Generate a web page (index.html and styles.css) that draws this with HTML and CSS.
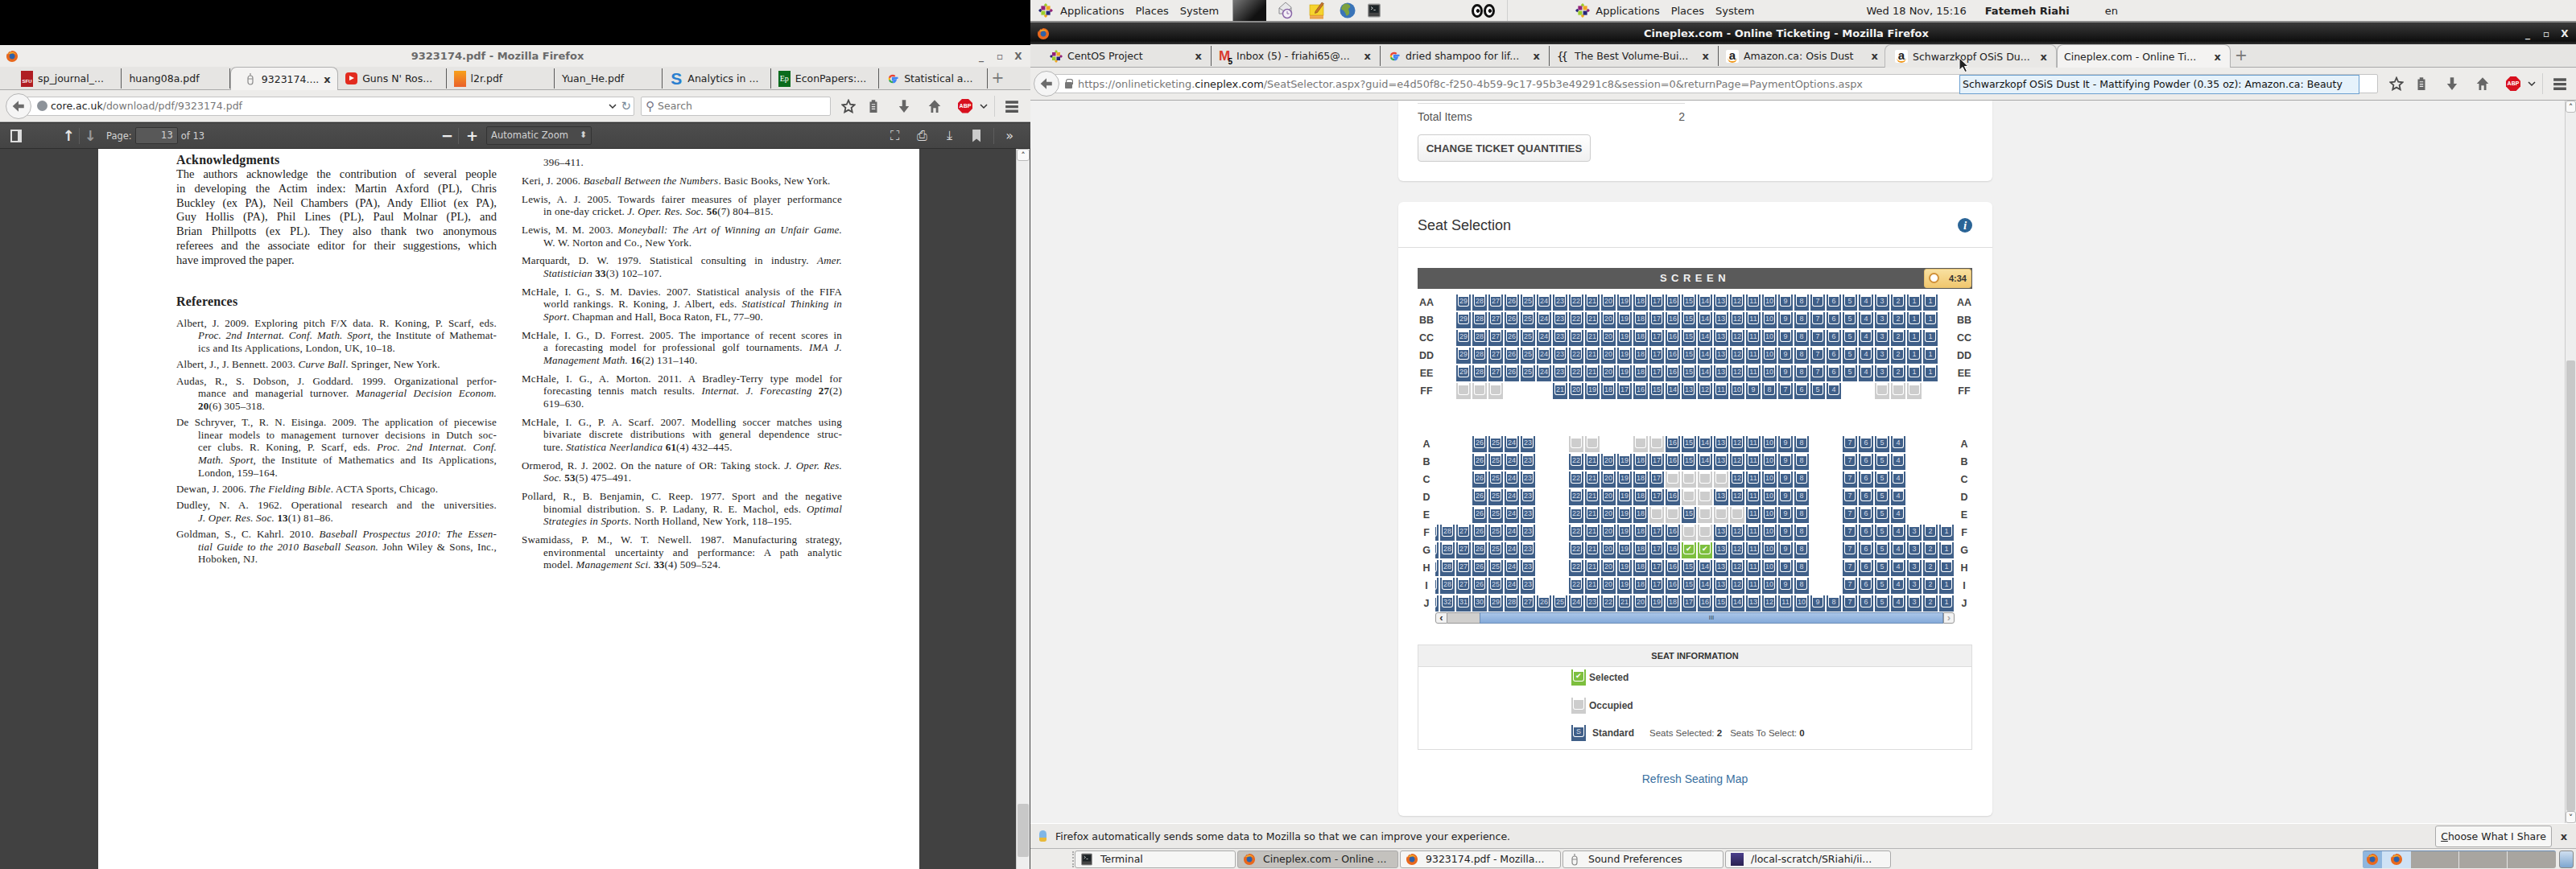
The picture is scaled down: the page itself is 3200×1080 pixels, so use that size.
FILE: index.html
```html
<!DOCTYPE html>
<html lang="en">
<head>
    <meta charset="UTF-8">
    <title>Desktop</title>
    <link rel="stylesheet" href="styles.css">
</head>
<body>
    <svg class="icon-defs" xmlns="http://www.w3.org/2000/svg">
        <symbol id="i-fox" viewBox="0 0 16 16">
            <circle cx="8" cy="8" r="6" fill="#2f62a8"/>
            <path d="M8 1c3.900 0 7 3.100 7 7s-3.100 7-7 7-7-3.100-7-7c0-1.500.5-3 1.300-4.200-.1.8.1 1.500.5 2 .1-1.600 1-3.300 2.700-4.200-.3.7-.3 1.300 0 1.800C5.900 2.200 6.900 1.400 8 1zm.2 3.200C6.300 4.200 4.600 5.700 4.600 8c0 2 1.600 3.500 3.500 3.500 2 0 3.500-1.500 3.500-3.400 0-2-1.500-3.900-3.400-3.900z" fill="#e8681d"/>
            <path d="M3 5c3-3 8-3 10 1-2-2-4-2-5-1.500C6 4.500 5 5 3 5z" fill="#f7b32b"/>
        </symbol>
        <symbol id="i-centos" viewBox="0 0 16 16">
            <path d="M8 0l2 2-2 2zM8 0L6 2l2 2z" fill="#9ccd2a"/>
            <path d="M16 8l-2 2-2-2zM16 8l-2-2-2 2z" fill="#932279"/>
            <path d="M8 16l2-2-2-2zM8 16l-2-2 2-2z" fill="#efa724"/>
            <path d="M0 8l2 2 2-2zM0 8l2-2 2 2z" fill="#262577"/>
            <rect x="3" y="3" width="4.500" height="4.500" fill="#932279"/>
            <rect x="8.500" y="3" width="4.500" height="4.500" fill="#efa724"/>
            <rect x="3" y="8.500" width="4.500" height="4.500" fill="#9ccd2a"/>
            <rect x="8.500" y="8.500" width="4.500" height="4.500" fill="#262577"/>
        </symbol>
        <symbol id="i-star" viewBox="0 0 16 16">
            <path d="M8 1.500l2 4.500 4.800.5-3.600 3.200 1 4.800L8 12.100l-4.200 2.400 1-4.800L1.200 6.500 6 6z" fill="none" stroke="#4a4a4a" stroke-width="1.600"/>
        </symbol>
        <symbol id="i-clip" viewBox="0 0 16 16">
            <path d="M6 1h4v2h2v12H4V3h2z" fill="#666"/>
            <path d="M6 6h4M6 8.500h4M6 11h4" stroke="#eee" stroke-width="1"/>
        </symbol>
        <symbol id="i-down" viewBox="0 0 16 16">
            <path d="M6 1h4v7h3.500L8 15 2.500 8H6z" fill="#666"/>
        </symbol>
        <symbol id="i-home" viewBox="0 0 16 16">
            <path d="M8 1l6.500 7H12v7H9.500v-5h-3v5H4V8H1.500z" fill="#666"/>
        </symbol>
        <symbol id="i-menu" viewBox="0 0 16 16">
            <path d="M1 2h14v3H1zM1 7h14v3H1zM1 12h14v3H1z" fill="#555"/>
        </symbol>
        <symbol id="i-back" viewBox="0 0 16 16">
            <path d="M8 2v4h6v4H8v4L1.500 8z" fill="#6b6b6b"/>
        </symbol>
        <symbol id="i-chev" viewBox="0 0 10 10">
            <path d="M1 3l4 4 4-4" fill="none" stroke="#333" stroke-width="1.500"/>
        </symbol>
        <symbol id="i-google" viewBox="0 0 16 16">
            <path d="M14.500 6.800H8v2.600h3.700C11.200 11.200 9.800 12.200 8 12.200" fill="none" stroke="#4285f4" stroke-width="2.200"/>
            <path d="M8 12.200c-1.900 0-3.500-1.200-4-3" fill="none" stroke="#34a853" stroke-width="2.200"/>
            <path d="M4 9.200c-.3-.9-.3-1.600 0-2.500" fill="none" stroke="#fbbc05" stroke-width="2.200"/>
            <path d="M4 6.700c.5-1.800 2.100-2.900 4-2.900 1.100 0 2 .4 2.700 1" fill="none" stroke="#ea4335" stroke-width="2.200"/>
        </symbol>
        <symbol id="i-term" viewBox="0 0 16 16">
            <rect x="1.500" y="1" width="13" height="14" rx="1" fill="#444" stroke="#999"/>
            <rect x="3" y="2.500" width="10" height="8" fill="#1c2326"/>
            <path d="M4.500 4l2 1.500-2 1.500M7.500 7.500h2" fill="none" stroke="#ddd" stroke-width=".8"/>
        </symbol>
        <symbol id="i-mouse" viewBox="0 0 16 16">
            <path d="M8 1v3M5 7a3 3 0 0 1 6 0v5a3 3 0 0 1-6 0z" fill="none" stroke="#8a8a8a" stroke-width="1.200"/>
            <path d="M5 8h6" stroke="#8a8a8a"/>
        </symbol>
        <symbol id="i-mail" viewBox="0 0 20 22">
            <path d="M2 8l8-7 7 6v8H2z" fill="#e8e8ea" stroke="#8c8c90"/>
            <path d="M2 8l8 5 7-5" fill="none" stroke="#8c8c90"/>
            <circle cx="12" cy="15" r="5.500" fill="#f4eff6" stroke="#8a66a8" stroke-width="1.500"/>
            <path d="M12 12v3h2.500" fill="none" stroke="#8a66a8"/>
        </symbol>
        <symbol id="i-note" viewBox="0 0 20 22">
            <rect x="1" y="4" width="17" height="13" fill="#f6d32d" stroke="#c9a10f" stroke-width=".6"/>
            <rect x="1" y="17" width="17" height="4.500" fill="#e89a3c"/>
            <path d="M1 18.500h17M1 20h17" stroke="#f4c27c" stroke-width=".5"/>
            <path d="M8 12l8-11 2.500 1.500-8 11-3 1z" fill="#c8752a" stroke="#6b3b10" stroke-width=".5"/>
        </symbol>
        <symbol id="i-globe" viewBox="0 0 20 22">
            <circle cx="10" cy="11" r="9.500" fill="#3a74b8"/>
            <path d="M6 3c3-1 6 0 7 2 1 2-1 3-2 4 0 2 2 3 1 6-1 2-3 3-4 2 0-3-2-4-3-6-1-1-3-1-3-2 1-3 2-5 4-6z" fill="#7da23f"/>
        </symbol>
    </svg>

    <div class="left-side">
        <div class="black-strip"></div>
        <div class="window window-light">
            <div class="titlebar titlebar-light">
                <svg class="fav"><use href="#i-fox"/></svg>
                <div class="title title-left">9323174.pdf - Mozilla Firefox</div>
                <div class="winbtns winbtns-left"><span>_</span><span>▫</span><span>X</span></div>
            </div>
            <div class="tabs tabs-left">
                <div class="tab"><span class="fav fav-sfu">SFU</span><span class="tab-name">sp_journal_...</span></div>
                <div class="tab"><span class="tab-name">huang08a.pdf</span></div>
                <div class="tab tab-active"><svg class="fav"><use href="#i-mouse"/></svg><span class="tab-name">9323174....</span><span class="tab-x">x</span></div>
                <div class="tab"><span class="fav fav-yt"></span><span class="tab-name">Guns N' Ros...</span></div>
                <div class="tab"><span class="fav fav-l2r"></span><span class="tab-name">l2r.pdf</span></div>
                <div class="tab"><span class="tab-name">Yuan_He.pdf</span></div>
                <div class="tab"><span class="fav fav-s">S</span><span class="tab-name">Analytics in ...</span></div>
                <div class="tab"><span class="fav fav-ep">Ep</span><span class="tab-name">EconPapers:...</span></div>
                <div class="tab"><svg class="fav"><use href="#i-google"/></svg><span class="tab-name">Statistical a...</span></div>
                <span class="tab-plus">+</span>
            </div>
            <div class="navbar navbar-left">
                <span class="back-btn"><svg class="nav-ic"><use href="#i-back"/></svg></span>
                <div class="urlbar urlbar-left">
                    <span class="globe"></span>
                    <span class="url"><b>core.ac.uk</b>/download/pdf/9323174.pdf</span>
                    <svg class="chev"><use href="#i-chev"/></svg>
                    <span class="reload">↻</span>
                </div>
                <div class="searchbar"><span class="lens">⚲</span>Search</div>
                <div class="nav-icons">
                    <svg class="nav-ic"><use href="#i-star"/></svg>
                    <svg class="nav-ic"><use href="#i-clip"/></svg>
                    <svg class="nav-ic"><use href="#i-down"/></svg>
                    <svg class="nav-ic"><use href="#i-home"/></svg>
                    <span class="nav-ic ic-abp">ABP</span>
                    <svg class="chev"><use href="#i-chev"/></svg>
                    <span class="nav-sep"></span>
                    <svg class="nav-ic"><use href="#i-menu"/></svg>
                </div>
            </div>
            <div class="pdf-toolbar">
                <span class="pdf-ic pdf-sidebar"></span>
                <span class="pdf-arrow">↑</span>
                <span class="pdf-sep"></span>
                <span class="pdf-arrow pdf-dim">↓</span>
                <span class="pdf-label">Page:</span>
                <span class="pdf-input">13</span>
                <span class="pdf-label">of 13</span>
                <span class="pdf-zoomctl">
                    <span class="pdf-pm">−</span>
                    <span class="pdf-sep"></span>
                    <span class="pdf-pm">+</span>
                    <span class="pdf-select">Automatic Zoom<i>⬍</i></span>
                </span>
                <span class="pdf-tools">
                    <span class="pdf-tool">⛶</span>
                    <span class="pdf-tool">⎙</span>
                    <span class="pdf-tool">⤓</span>
                    <span class="pdf-tool pdf-mark"></span>
                    <span class="pdf-sep"></span>
                    <span class="pdf-tool">»</span>
                </span>
            </div>
            <div class="pdf-view">
                <div class="pdf-page">
                    <div class="pdf-col">
                        <h3 class="pdf-head">Acknowledgments</h3>
                        <p class="ack">
                            <span class="ln">The authors acknowledge the contribution of several people</span>
                            <span class="ln">in developing the Actim index: Martin Axford (PL), Chris</span>
                            <span class="ln">Buckley (ex PA), Neil Chambers (PA), Andy Elliot (ex PA),</span>
                            <span class="ln">Guy Hollis (PA), Phil Lines (PL), Paul Molnar (PL), and</span>
                            <span class="ln">Brian Phillpotts (ex PL). They also thank two anonymous</span>
                            <span class="ln">referees and the associate editor for their suggestions, which</span>
                            <span class="ln end">have improved the paper.</span>
                        </p>
                        <h3 class="pdf-head pdf-head-refs">References</h3>
                        <p class="ref"><span class="ln">Albert, J. 2009. Exploring pitch F/X data. R. Koning, P. Scarf, eds.</span><span class="ln in"><i>Proc. 2nd Internat. Conf. Math. Sport</i>, the Institute of Mathemat-</span><span class="ln in end">ics and Its Applications, London, UK, 10–18.</span></p>
                        <p class="ref"><span class="ln end">Albert, J., J. Bennett. 2003. <i>Curve Ball</i>. Springer, New York.</span></p>
                        <p class="ref"><span class="ln">Audas, R., S. Dobson, J. Goddard. 1999. Organizational perfor-</span><span class="ln in">mance and managerial turnover. <i>Managerial Decision Econom.</i></span><span class="ln in end"><b>20</b>(6) 305–318.</span></p>
                        <p class="ref"><span class="ln">De Schryver, T., R. N. Eisinga. 2009. The application of piecewise</span><span class="ln in">linear models to management turnover decisions in Dutch soc-</span><span class="ln in">cer clubs. R. Koning, P. Scarf, eds. <i>Proc. 2nd Internat. Conf.</i></span><span class="ln in"><i>Math. Sport</i>, the Institute of Mathematics and Its Applications,</span><span class="ln in end">London, 159–164.</span></p>
                        <p class="ref"><span class="ln end">Dewan, J. 2006. <i>The Fielding Bible</i>. ACTA Sports, Chicago.</span></p>
                        <p class="ref"><span class="ln">Dudley, N. A. 1962. Operational research and the universities.</span><span class="ln in end"><i>J. Oper. Res. Soc.</i> <b>13</b>(1) 81–86.</span></p>
                        <p class="ref"><span class="ln">Goldman, S., C. Kahrl. 2010. <i>Baseball Prospectus 2010: The Essen-</i></span><span class="ln in"><i>tial Guide to the 2010 Baseball Season.</i> John Wiley &amp; Sons, Inc.,</span><span class="ln in end">Hoboken, NJ.</span></p>
                    </div>
                    <div class="pdf-col pdf-col-right">
                        <p class="ref"><span class="ln in end">396–411.</span></p>
                        <p class="ref"><span class="ln end">Keri, J. 2006. <i>Baseball Between the Numbers</i>. Basic Books, New York.</span></p>
                        <p class="ref"><span class="ln">Lewis, A. J. 2005. Towards fairer measures of player performance</span><span class="ln in end">in one-day cricket. <i>J. Oper. Res. Soc.</i> <b>56</b>(7) 804–815.</span></p>
                        <p class="ref"><span class="ln">Lewis, M. M. 2003. <i>Moneyball: The Art of Winning an Unfair Game.</i></span><span class="ln in end">W. W. Norton and Co., New York.</span></p>
                        <p class="ref"><span class="ln">Marquardt, D. W. 1979. Statistical consulting in industry. <i>Amer.</i></span><span class="ln in end"><i>Statistician</i> <b>33</b>(3) 102–107.</span></p>
                        <p class="ref"><span class="ln">McHale, I. G., S. M. Davies. 2007. Statistical analysis of the FIFA</span><span class="ln in">world rankings. R. Koning, J. Albert, eds. <i>Statistical Thinking in</i></span><span class="ln in end"><i>Sport</i>. Chapman and Hall, Boca Raton, FL, 77–90.</span></p>
                        <p class="ref"><span class="ln">McHale, I. G., D. Forrest. 2005. The importance of recent scores in</span><span class="ln in">a forecasting model for professional golf tournaments. <i>IMA J.</i></span><span class="ln in end"><i>Management Math.</i> <b>16</b>(2) 131–140.</span></p>
                        <p class="ref"><span class="ln">McHale, I. G., A. Morton. 2011. A Bradley-Terry type model for</span><span class="ln in">forecasting tennis match results. <i>Internat. J. Forecasting</i> <b>27</b>(2)</span><span class="ln in end">619–630.</span></p>
                        <p class="ref"><span class="ln">McHale, I. G., P. A. Scarf. 2007. Modelling soccer matches using</span><span class="ln in">bivariate discrete distributions with general dependence struc-</span><span class="ln in end">ture. <i>Statistica Neerlandica</i> <b>61</b>(4) 432–445.</span></p>
                        <p class="ref"><span class="ln">Ormerod, R. J. 2002. On the nature of OR: Taking stock. <i>J. Oper. Res.</i></span><span class="ln in end"><i>Soc.</i> <b>53</b>(5) 475–491.</span></p>
                        <p class="ref"><span class="ln">Pollard, R., B. Benjamin, C. Reep. 1977. Sport and the negative</span><span class="ln in">binomial distribution. S. P. Ladany, R. E. Machol, eds. <i>Optimal</i></span><span class="ln in end"><i>Strategies in Sports</i>. North Holland, New York, 118–195.</span></p>
                        <p class="ref"><span class="ln">Swamidass, P. M., W. T. Newell. 1987. Manufacturing strategy,</span><span class="ln in">environmental uncertainty and performance: A path analytic</span><span class="ln in end">model. <i>Management Sci.</i> <b>33</b>(4) 509–524.</span></p>
                    </div>
                </div>
                <div class="sb sb-dark">
                    <span class="sb-btn">˄</span>
                    <span class="sb-track"></span>
                    <span class="sb-thumb sb-thumb-dark"></span>
                </div>
            </div>
        </div>
    </div>

    <div class="right-side">
        <div class="top-panel">
            <svg class="panel-logo"><use href="#i-centos"/></svg>
            <span class="menu-item">Applications</span>
            <span class="menu-item">Places</span>
            <span class="menu-item">System</span>
            <span class="panel-thumb"></span>
            <svg class="launcher launcher-mail"><use href="#i-mail"/></svg>
            <svg class="launcher launcher-note"><use href="#i-note"/></svg>
            <svg class="launcher launcher-globe"><use href="#i-globe"/></svg>
            <svg class="launcher launcher-term"><use href="#i-term"/></svg>
            <span class="eyes"><i></i><i></i></span>
            <span class="panel-sep"></span>
            <svg class="panel-logo"><use href="#i-centos"/></svg>
            <span class="menu-item">Applications</span>
            <span class="menu-item">Places</span>
            <span class="menu-item">System</span>
            <span class="clock">Wed 18 Nov, 15:16</span>
            <b class="user">Fatemeh Riahi</b>
            <span class="lang">en</span>
        </div>
        <div class="window window-dark">
            <div class="titlebar titlebar-dark">
                <svg class="fav"><use href="#i-fox"/></svg>
                <div class="title title-right">Cineplex.com - Online Ticketing - Mozilla Firefox</div>
                <div class="winbtns"><span>_</span><span>▫</span><span>X</span></div>
            </div>
            <div class="tabs tabs-right">
                <div class="tab"><svg class="fav"><use href="#i-centos"/></svg><span class="tab-name">CentOS Project</span><span class="tab-x">x</span></div>
                <div class="tab"><span class="fav fav-gmail">M<sub>5</sub></span><span class="tab-name">Inbox (5) - friahi65@...</span><span class="tab-x">x</span></div>
                <div class="tab"><svg class="fav"><use href="#i-google"/></svg><span class="tab-name">dried shampoo for lif...</span><span class="tab-x">x</span></div>
                <div class="tab"><span class="fav fav-bv">{{</span><span class="tab-name">The Best Volume-Bui...</span><span class="tab-x">x</span></div>
                <div class="tab"><span class="fav fav-az">a</span><span class="tab-name">Amazon.ca: Osis Dust</span><span class="tab-x">x</span></div>
                <div class="tab tab-hover"><span class="fav fav-az">a</span><span class="tab-name">Schwarzkopf OSiS Du...</span><span class="tab-x">x</span></div>
                <div class="tab tab-active tab-cineplex"><span class="tab-name">Cineplex.com - Online Ti...</span><span class="tab-x">x</span></div>
                <span class="tab-plus">+</span>
            </div>
            <div class="navbar navbar-right">
                <span class="back-btn"><svg class="nav-ic"><use href="#i-back"/></svg></span>
                <div class="urlbar urlbar-right">
                    <span class="lock"></span>
                    <span class="url">https://onlineticketing.<b>cineplex.com</b>/SeatSelector.aspx?guid=e4d50f8c-f250-4b59-9c17-95b3e49291c8&amp;session=0&amp;returnPage=PaymentOptions.aspx</span>
                </div>
                <div class="nav-icons">
                    <svg class="nav-ic"><use href="#i-star"/></svg>
                    <svg class="nav-ic"><use href="#i-clip"/></svg>
                    <svg class="nav-ic"><use href="#i-down"/></svg>
                    <svg class="nav-ic"><use href="#i-home"/></svg>
                    <span class="nav-ic ic-abp">ABP</span>
                    <svg class="chev"><use href="#i-chev"/></svg>
                    <span class="nav-sep"></span>
                    <svg class="nav-ic"><use href="#i-menu"/></svg>
                </div>
            </div>
            <div class="web-view">
                <div class="web-scroll">
                    <div class="card card-tickets">
                        <div class="total-row"><span>Total Items</span><span>2</span></div>
                        <button class="btn-change">CHANGE TICKET QUANTITIES</button>
                    </div>
                    <div class="card card-seats">
                        <div class="card-head">
                            <h2>Seat Selection</h2>
                            <span class="info-ic">i</span>
                        </div>
                        <div class="card-body">
                            <div class="screen">SCREEN<span class="timer"><i class="timer-ic"></i>4:34</span></div>
                            <div id="seat-map" class="seat-map"></div>
                            <div class="map-scrollbar">
                                <span class="map-btn">‹</span>
                                <span class="map-track"></span>
                                <span class="map-thumb">III</span>
                                <span class="map-btn map-btn-r">›</span>
                            </div>
                            <div class="seat-info">
                                <div class="seat-info-head">SEAT INFORMATION</div>
                                <div class="legend">
                                    <div class="legend-row"><span class="seat seat-selected"><span class="seat-in">✔</span></span><b>Selected</b></div>
                                    <div class="legend-row"><span class="seat seat-occupied"><span class="seat-in"></span></span><b>Occupied</b></div>
                                    <div class="legend-row legend-std"><span class="seat"><span class="seat-in">S</span></span><b>Standard</b>
                                        <span class="legend-count">Seats Selected: <b>2</b></span>
                                        <span class="legend-count">Seats To Select: <b>0</b></span>
                                    </div>
                                </div>
                            </div>
                            <a class="refresh" href="#">Refresh Seating Map</a>
                        </div>
                    </div>
                </div>
                <div class="sb sb-light">
                    <span class="sb-btn">˄</span>
                    <span class="sb-track"></span>
                    <span class="sb-thumb"></span>
                    <span class="sb-btn">˅</span>
                </div>
            </div>
            <div class="notice">
                <span class="bulb"></span>
                <span class="notice-text">Firefox automatically sends some data to Mozilla so that we can improve your experience.</span>
                <button class="notice-btn"><u>C</u>hoose What I Share</button>
                <span class="tab-x notice-x">x</span>
            </div>

            <div class="tooltip">Schwarzkopf OSiS Dust It - Mattifying Powder (0.35 oz): Amazon.ca: Beauty</div>
            <svg class="cursor" viewBox="0 0 12 20"><path d="M1 1v15l4-3.500 3 6 2.500-1-3-6H12z" fill="#222" stroke="#fff" stroke-width="1"/></svg>
        </div>
        <div class="bottom-panel">
            <span class="grip"></span>
            <div class="task"><svg class="fav"><use href="#i-term"/></svg>Terminal</div>
            <div class="task task-active"><svg class="fav"><use href="#i-fox"/></svg>Cineplex.com - Online ...</div>
            <div class="task"><svg class="fav"><use href="#i-fox"/></svg>9323174.pdf - Mozilla...</div>
            <div class="task"><svg class="fav"><use href="#i-mouse"/></svg>Sound Preferences</div>
            <div class="task task-wide"><span class="fav fav-tex"></span>/local-scratch/SRiahi/ii...</div>
            <div class="pager">
                <span class="pager-cell pager-on"><svg class="fav"><use href="#i-fox"/></svg></span>
                <span class="pager-cell pager-half"><svg class="fav"><use href="#i-fox"/></svg></span>
                <span class="pager-cell"></span>
                <span class="pager-cell"></span>
                <span class="pager-cell"></span>
            </div>
            <span class="show-desk"></span>
        </div>
    </div>
    <script src="seats.js"></script>
</body>
</html>
```

FILE: styles.css
```css
* { box-sizing: border-box; }
html, body { margin: 0; height: 100%; }
body { width: 3200px; height: 1080px; overflow: hidden; display: flex; font-family: "DejaVu Sans", sans-serif; font-size: 12.5px; color: #333; background: #000; }
.icon-defs { width: 0; height: 0; position: absolute; }
.fav { width: 16px; height: 16px; flex: none; display: inline-block; }

.left-side { width: 1280px; display: flex; flex-direction: column; flex: none; }
.black-strip { height: 56px; background: #000; flex: none; }
.right-side { width: 1920px; display: flex; flex-direction: column; flex: none; }
.window { flex: 1; min-height: 0; display: flex; flex-direction: column; position: relative; background: #edecea; }

/* title bars */
.titlebar { display: flex; align-items: center; flex: none; padding: 0 1px 0 7px; }
.titlebar-light { height: 27px; background: #eeedeb; border-radius: 4px 4px 0 0; }
.titlebar-dark { height: 27px; background: linear-gradient(#3a3a3a, #0f0f0f 85%, #333); padding: 0 0 0 8px; }
.title { flex: 1; text-align: center; font-weight: 700; font-size: 13px; }
.title-left { color: #6a6a6a; }
.title-right { color: #f2f2f2; }
.winbtns { display: flex; gap: 11px; font-weight: 700; font-size: 12px; color: #eee; width: 66px; }
.winbtns span { width: 12px; text-align: center; }
.winbtns-left { color: #666; }

/* tabs */
.tabs { display: flex; align-items: stretch; flex: none; background: #e6e5e3; border-bottom: 1px solid #a9a9a9; }
.tabs-left { height: 29px; padding-left: 17px; }
.tabs-right { height: 29px; padding-left: 15px; }
.tab { display: flex; align-items: center; gap: 6px; padding-left: 9px; padding-right: 11px; border-right: 1px solid #5a5a5a; margin: 2px 0 1px; white-space: nowrap; color: #222; flex: none; }
.tabs-left .tab { width: 134.4px; }
.tabs-right .tab { width: 210px; }
.tab-name { flex: none; }
.tab-x { font-weight: 700; font-size: 13px; color: #333; margin-left: auto; }
.tab-active { background: #f4f3f2; border: 1px solid #b0b0b0; border-bottom: none; border-radius: 8px 8px 0 0; margin: 0 0 -1px; padding-left: 16px; }
.tabs-left .tab-active { padding-right: 13px; }
.tabs-right .tab-hover { background: #e9e8e6; border: 1px solid #b8b8b8; border-bottom: none; border-radius: 8px 8px 0 0; margin: 0 0 -1px -4px; padding-left: 12px; width: 214px; }
.tabs-right .tab-cineplex { padding-left: 8px; width: 216px; }
.tab-plus { width: 26px; text-align: center; font-size: 19px; line-height: 27px; color: #777; }
.fav-sfu { width: 15px; height: 20px; background: #b01d22; color: #fff; font: 700 6px/26px "Liberation Sans", sans-serif; text-align: center; }
.fav-yt { background: #e22b1f; border-radius: 4px; position: relative; width: 15px; height: 15px; }
.fav-yt::after { content: ""; position: absolute; left: 5px; top: 4px; border-left: 6px solid #fff; border-top: 3.500px solid transparent; border-bottom: 3.500px solid transparent; }
.fav-l2r { width: 15px; height: 20px; background: linear-gradient(#f7a11b, #e9602a); }
.fav-s { color: #2a7fd0; font: 700 21px/16px "Liberation Sans", sans-serif; text-align: center; }
.fav-ep { background: #0a6b1c; color: #fff; width: 15px; height: 20px; font: 10px/20px "Liberation Serif", serif; text-align: center; }
.fav-gmail { color: #d93a30; font: 700 17px/15px "Liberation Sans", sans-serif; position: relative; }
.fav-gmail sub { position: absolute; right: -1px; bottom: -4px; font-size: 10px; color: #000; line-height: 10px; }
.fav-bv { font: 14px/16px "DejaVu Sans Mono", monospace; color: #222; letter-spacing: -3px; }
.fav-az { background: #fff; border-radius: 2px; color: #222; font: 700 15px/13px "Liberation Sans", sans-serif; text-align: center; position: relative; }
.fav-az::after { content: ""; position: absolute; left: 2px; right: 2px; bottom: 0; height: 5px; border-bottom: 2px solid #f19a1f; border-radius: 0 0 8px 8px; }

/* nav bar */
.navbar { display: flex; align-items: center; flex: none; background: #edecea; border-bottom: 1px solid #a9a9a9; position: relative; }
.navbar-left { height: 40px; padding-left: 7px; }
.navbar-right { height: 41px; padding-left: 4px; }
.back-btn { width: 32px; height: 32px; border-radius: 50%; border: 1px solid #b5b5b5; background: #f5f5f5; display: flex; align-items: center; justify-content: center; flex: none; z-index: 1; margin-right: -6px; }
.urlbar, .searchbar { height: 24px; background: #fff; border: 1px solid #c4c4c4; border-radius: 2px; display: flex; align-items: center; color: #777; flex: none; font-size: 12.5px; }
.urlbar-left { width: 755px; padding-left: 12px; margin-right: 8px; }
.urlbar-right { width: 1644px; padding-left: 12px; font-size: 12.9px; margin-right: 14px; }
.urlbar .url { flex: 1; white-space: nowrap; margin-left: 4px; }
.urlbar .url b { font-weight: 400; color: #222; }
.globe { width: 13px; height: 13px; border-radius: 50%; background: #8d939a; flex: none; }
.lock { width: 9px; height: 8px; background: #777; border-radius: 1px; flex: none; margin: 3px 3px 0 0; position: relative; }
.lock::before { content: ""; position: absolute; left: 1px; top: -4px; width: 7px; height: 6px; border: 1.500px solid #777; border-bottom: none; border-radius: 3px 3px 0 0; }
.chev { width: 10px; height: 10px; flex: none; }
.reload { color: #7a8a9a; font-size: 15px; margin: 0 3px 0 5px; }
.searchbar { width: 236px; padding-left: 5px; margin-right: 13px; }
.lens { color: #778; font-size: 15px; margin-right: 4px; transform: scaleX(-1); }
.nav-icons { display: flex; align-items: center; flex: none; }
.nav-ic { width: 18px; height: 18px; flex: none; }
.nav-icons .nav-ic { margin-right: 20px; }
.nav-icons .nav-ic:first-child { margin-right: 13px; }
.ic-abp { display: block; background: #d8101e; clip-path: polygon(30% 0, 70% 0, 100% 30%, 100% 70%, 70% 100%, 30% 100%, 0 70%, 0 30%); color: #fff; font: 700 7px/18px "Liberation Sans", sans-serif; text-align: center; }
.nav-icons .chev { margin-left: -11px; margin-right: 8px; }
.nav-sep { width: 1px; height: 26px; background: #d0d0d0; margin-right: 12px; }
.nav-icons .nav-ic:last-child { margin-right: 0; }

/* pdf viewer */
.pdf-toolbar { height: 33px; flex: none; background: linear-gradient(#4d4d4d, #444); display: flex; align-items: center; color: #d4d4d4; font-size: 11.5px; padding-left: 13px; border-top: 1px solid #2e2e2e; border-bottom: 1px solid #2e2e2e; }
.pdf-ic { width: 14px; height: 16px; border: 2px solid #ddd; border-right-width: 5px; flex: none; margin-right: 50px; }
.pdf-arrow { font-size: 18px; font-weight: 700; color: #e6e6e6; width: 16px; text-align: center; }
.pdf-dim { color: #999; }
.pdf-sep { width: 1px; height: 20px; background: #333; border-right: 1px solid #5c5c5c; flex: none; margin: 0 5px; }
.pdf-label { margin: 0 4px 0 12px; }
.pdf-label + .pdf-input + .pdf-label { margin-left: 4px; }
.pdf-input { width: 53px; height: 21px; background: #585858; border: 1px solid #333; border-radius: 2px; text-align: right; padding: 2px 5px 0 0; }
.pdf-zoomctl { display: flex; align-items: center; margin-left: 290px; }
.pdf-zoomctl .pdf-sep { margin: 0 9px; }
.pdf-pm { font-size: 18px; font-weight: 700; color: #eee; width: 12px; text-align: center; }
.pdf-select { width: 131px; height: 23px; margin-left: 13px; background: #4a4a4a; border: 1px solid #333; border-radius: 2px; padding: 3px 5px; display: flex; justify-content: space-between; }
.pdf-select i { font-style: normal; font-size: 11px; }
.pdf-tools { display: flex; align-items: center; margin-left: 366px; gap: 14px; }
.pdf-tool { width: 20px; text-align: center; font-size: 16px; color: #ddd; }
.pdf-mark { width: 10px; height: 16px; background: #ccc; clip-path: polygon(0 0, 100% 0, 100% 100%, 50% 75%, 0 100%); margin: 0 5px; }
.pdf-tools .pdf-sep { margin: 0 -5px 0 -3px; }

.pdf-view { flex: 1; min-height: 0; background: #414141; display: flex; position: relative; overflow: hidden; }
.pdf-page { width: 1020px; margin-left: 122px; background: #fff; flex: none; display: flex; font-family: "Liberation Serif", serif; color: #222; padding: 5px 0 0 97px; height: 900px; overflow: hidden; }
.pdf-col { width: 398px; flex: none; }
.pdf-col-right { margin: 4px 0 0 31px; }
.pdf-head { margin: 0; font-size: 16px; line-height: 17px; letter-spacing: .2px; }
.pdf-head-refs { margin: 33px 0 11px; }
.ack { margin: 1px 0 0; font-size: 14.5px; line-height: 17.8px; }
.ln { display: block; text-align: justify; text-align-last: justify; white-space: nowrap; }
.in { padding-left: 27px; }
.end { text-align-last: left; }
.ref { margin: 0 0 4.800px; font-size: 13px; line-height: 15.6px; letter-spacing: .2px; }
.pdf-col-right .ref { margin-bottom: 7.200px; }

.sb { width: 14px; display: flex; flex-direction: column; flex: none; position: relative; background: #eee; border-left: 1px solid #ccc; font-size: 11px; text-align: center; }
.sb-dark { margin-left: 120px; width: 17px; }
.sb-btn { height: 15px; line-height: 15px; background: #fafafa; border: 1px solid #bbb; border-radius: 3px; color: #333; flex: none; }
.sb-track { flex: 1; }
.sb-thumb { position: absolute; left: 1px; right: 1px; top: 323px; bottom: 15px; background: #c8c8c8; border-radius: 2px; }
.sb-thumb-dark { top: auto; bottom: 15px; height: 66px; }

/* top panel */
.top-panel { height: 28px; flex: none; background: #edecea; border-bottom: 2px solid #8c8c8c; display: flex; align-items: center; padding-left: 10px; font-size: 13px; color: #222; }
.panel-logo { width: 18px; height: 20px; flex: none; margin-right: 9px; }
.menu-item { margin-right: 14px; flex: none; }
.panel-thumb { width: 42px; height: 26px; background: linear-gradient(135deg, #777, #111 70%); border-left: 1px solid #999; margin: 0 14px 0 3px; flex: none; }
.launcher { height: 22px; flex: none; }
.launcher-mail { width: 20px; margin-right: 19px; }
.launcher-note { width: 20px; margin-right: 18px; }
.launcher-globe { width: 20px; margin-right: 14px; }
.launcher-term { width: 18px; }
.eyes { display: flex; margin-left: 112px; gap: 1px; flex: none; }
.eyes i { width: 14px; height: 17px; border: 3px solid #111; border-radius: 50%; background: radial-gradient(circle at 60% 50%, #111 0 2px, #fff 2.500px); }
.panel-sep { width: 1px; height: 26px; background: #cfcfcf; margin: 0 84px 0 15px; flex: none; }
.panel-sep + .panel-logo { margin-right: 7px; }
.clock { margin-left: 125px; flex: none; }
.user { margin-left: 23px; flex: none; }
.lang { margin-left: 44px; flex: none; }

/* web page */
.web-view { flex: 1; min-height: 0; display: flex; background: #f1f1f1; }
.web-scroll { flex: 1; padding-left: 457px; overflow: hidden; }
.card { width: 738px; background: #fff; box-shadow: 0 1px 2px rgba(0,0,0,.12); font-family: "Liberation Sans", sans-serif; }
.card-tickets { height: 100px; padding: 3px 24px 0; border-radius: 0 0 6px 6px; }
.total-row { width: 332px; display: flex; justify-content: space-between; border-top: 1px solid #ddd; padding-top: 8px; font-size: 14px; line-height: 16px; color: #555; }
.btn-change { display: block; margin-top: 14px; width: 215px; height: 34px; border: 1px solid #ccc; border-radius: 4px; background: linear-gradient(#fff, #f0f0f0); font: 700 13.3px "Liberation Sans", sans-serif; color: #444; padding: 0; white-space: nowrap; }
.card-seats { margin-top: 26px; height: 763px; border-radius: 6px; }
.card-head { height: 57px; border-bottom: 1px solid #ddd; display: flex; align-items: center; justify-content: space-between; padding: 2px 25px 0 24px; }
.card-head h2 { margin: 0; font-size: 18px; font-weight: 400; color: #333; }
.info-ic { width: 18px; height: 18px; border-radius: 50%; background: #2a6496; color: #fff; font: italic 700 15px/18px "Liberation Serif", serif; text-align: center; }
.card-body { padding: 25px 25px 0 24px; }

.screen { height: 26px; background: #5a5a5a; color: #f2f2f2; font-weight: 700; font-size: 13px; letter-spacing: 5.500px; text-align: center; line-height: 26px; position: relative; margin-bottom: 7px; }
.timer { position: absolute; right: 1px; top: 1px; width: 59px; height: 24px; background: linear-gradient(#f8e0a0, #f1c76e); border: 1px solid #e4c070; border-radius: 3px; color: #333; font-size: 11px; letter-spacing: 0; line-height: 22px; text-align: right; padding-right: 5px; }
.timer-ic { position: absolute; left: 5px; top: 4px; width: 13px; height: 13px; border-radius: 50%; border: 2px solid #d0913a; background: #fff; }

.seat-row { display: flex; height: 22px; }
.row-label { width: 22px; height: 20px; line-height: 20px; text-align: center; flex: none; font-weight: 700; font-size: 12.5px; color: #444; }
.seat-clip { width: 646px; height: 20px; overflow: hidden; flex: none; display: flex; gap: 2px; }
.slot-gap, .seat { width: 18px; height: 20px; flex: none; }
.slot-first { margin-left: -14px; }
.seat { background: #3f5f88; padding: 0 2px 5px; display: block; }
.seat-in { display: block; height: 15px; background: #3f5f88; border: 1px solid #fff; border-top-width: 3px; border-radius: 0 0 3px 3px; color: #d5dde8; font: 9px/11px "Liberation Sans", sans-serif; text-align: center; }
.seat-occupied { background: #cdcdcd; }
.seat-occupied .seat-in { background: #cdcdcd; }
.seat-selected { background: #7dbf3e; }
.seat-selected .seat-in { background: #7dbf3e; color: #fff; font-size: 9px; }

.map-scrollbar { display: flex; height: 14px; margin: -1px 22px 0; position: relative; }
.map-btn { width: 15px; background: #f2f2f2; border: 1px solid #999; border-radius: 3px 0 0 3px; text-align: center; font: 700 13px/11px "Liberation Sans", sans-serif; color: #333; flex: none; }
.map-btn-r { width: 14px; border-radius: 0 3px 3px 0; color: #aaa; }
.map-track { width: 40px; background: #d0cfcd; border-top: 1px solid #999; border-bottom: 1px solid #999; flex: none; }
.map-thumb { flex: 1; background: linear-gradient(#a9c5e8, #85aad9); border: 1px solid #6e8fb8; text-align: center; font: 8px/12px "Liberation Sans", sans-serif; color: #345; }

.seat-info { margin-top: 26px; height: 131px; border: 1px solid #ddd; }
.seat-info-head { height: 27px; background: #f0f0f0; border-bottom: 1px solid #ddd; text-align: center; font-weight: 700; font-size: 11px; line-height: 26px; color: #333; }
.legend { padding: 3px 0 0 190px; }
.legend-row { display: flex; align-items: flex-start; height: 34.5px; font-size: 12px; color: #444; line-height: 20px; }
.legend-row > b { margin-left: 4px; }
.legend-std > b { margin-left: 8px; margin-right: 19px; }
.legend-count { margin-right: 10px; color: #555; font-size: 11.5px; }
.legend-count b { color: #333; }
.refresh { display: block; margin-top: 28px; text-align: center; color: #3a70a0; font-size: 14px; text-decoration: none; }

/* notification and panels */
.notice { height: 32px; flex: none; display: flex; align-items: center; background: #ebeae8; border-top: 1px solid #fff; border-bottom: 1px solid #b5b5b5; padding-left: 11px; font-size: 12.5px; color: #222; }
.bulb { width: 9px; height: 14px; border-radius: 5px 5px 3px 3px; background: linear-gradient(#7fb6e6 65%, #e8b93a 65%); flex: none; margin-right: 11px; }
.notice-text { flex: 1; }
.notice-btn { width: 145px; height: 27px; background: #f7f7f6; border: 1px solid #aaa; border-radius: 3px; font: 12.5px "DejaVu Sans", sans-serif; color: #222; padding: 0; flex: none; white-space: nowrap; }
.notice-x { width: 30px; text-align: center; margin-left: 0; }

.bottom-panel { height: 25px; flex: none; background: #edecea; display: flex; align-items: center; padding-left: 52px; font-size: 12.5px; color: #222; }
.grip { width: 3px; height: 20px; border-left: 2px dotted #aaa; flex: none; }
.task { width: 200px; height: 22px; flex: none; display: flex; align-items: center; gap: 9px; padding-left: 6px; background: #f6f6f5; border: 1px solid #aaa; border-radius: 3px; margin-right: 2px; white-space: nowrap; }
.task-active { background: #c4c2be; }
.task-wide { width: 206px; }
.fav-tex { background: linear-gradient(#4b3f8c, #2a2150); }
.pager { margin-left: 584px; width: 240px; height: 22px; display: flex; background: #a8a5a0; border-radius: 3px; overflow: hidden; flex: none; border-top: 1px solid #6e8fb8; }
.pager-cell { width: 60px; display: flex; align-items: center; justify-content: center; border-right: 1px solid #e5e5e5; }
.pager-cell:last-child { border-right: none; }
.pager-on { background: #8fb6de; width: 24px; border-right: none; }
.pager-half { background: #cfe2f5; width: 36px; border-right: none; }
.show-desk { width: 18px; height: 22px; margin-left: 4px; border-radius: 3px; border: 1px solid #8a8a8a; background: linear-gradient(#cfdff0, #7ea6cf); flex: none; }

/* overlays */
.tooltip { position: absolute; left: 1154px; top: 65px; width: 497px; height: 24px; background: #e6f2fb; border: 1px solid #6a9fd0; color: #111; font-size: 12.5px; line-height: 22px; padding-left: 3px; white-space: nowrap; z-index: 5; }
.cursor { position: absolute; left: 1153px; top: 43px; width: 12px; height: 20px; z-index: 6; }
```

FILE: seats.js
```js
// runs are [first slot, first number, count]; slot 0 sits under the left edge of the scroller
const ROWS = [
    { name: 'AA', runs: [[2, 29, 29], [31, 1, 1]] },
    { name: 'BB', runs: [[2, 29, 29], [31, 1, 1]] },
    { name: 'CC', runs: [[2, 29, 29], [31, 1, 1]] },
    { name: 'DD', runs: [[2, 29, 29], [31, 1, 1]] },
    { name: 'EE', runs: [[2, 29, 29], [31, 1, 1]] },
    { name: 'FF', runs: [[2, 29, 3], [8, 21, 18], [28, 3, 3]], occupied: [29, 28, 27, 3, 2, 1] },
    { name: '' },
    { name: '' },
    { name: 'A', runs: [[3, 26, 4], [9, 22, 2], [13, 18, 11], [26, 7, 4]], occupied: [22, 21, 18, 17] },
    { name: 'B', runs: [[3, 26, 4], [9, 22, 15], [26, 7, 4]] },
    { name: 'C', runs: [[3, 26, 4], [9, 22, 15], [26, 7, 4]], occupied: [16, 15, 14, 13] },
    { name: 'D', runs: [[3, 26, 4], [9, 22, 15], [26, 7, 4]], occupied: [15, 14] },
    { name: 'E', runs: [[3, 26, 4], [9, 22, 15], [26, 7, 4]], occupied: [17, 16, 14, 13, 12] },
    { name: 'F', runs: [[0, 29, 7], [9, 22, 15], [26, 7, 7]], occupied: [15, 14] },
    { name: 'G', runs: [[0, 29, 7], [9, 22, 15], [26, 7, 7]], selected: [15, 14] },
    { name: 'H', runs: [[0, 29, 7], [9, 22, 15], [26, 7, 7]] },
    { name: 'I', runs: [[0, 29, 7], [9, 22, 15], [26, 7, 7]] },
    { name: 'J', runs: [[0, 33, 33]] }
];

const map = document.getElementById('seat-map');

function makeLabel(text) {
    const el = document.createElement('span');
    el.className = 'row-label';
    el.textContent = text;
    return el;
}

function makeSeat(number, row, slot) {
    const seat = document.createElement('span');
    const inner = document.createElement('span');
    seat.className = 'seat';
    inner.className = 'seat-in';
    if ((row.occupied || []).includes(number)) {
        seat.classList.add('seat-occupied');
    } else if ((row.selected || []).includes(number)) {
        seat.classList.add('seat-selected');
        inner.textContent = '✔';
    } else if (slot > 0) {
        // slot 0 is scrolled out of view apart from its right arm
        inner.textContent = number;
    }
    seat.appendChild(inner);
    return seat;
}

ROWS.forEach((row) => {
    const rowEl = document.createElement('div');
    rowEl.className = 'seat-row';
    const clip = document.createElement('div');
    clip.className = 'seat-clip';

    const cells = new Array(33).fill(null);
    (row.runs || []).forEach(([slot, number, count]) => {
        for (let i = 0; i < count; i++) {
            cells[slot + i] = makeSeat(number - i, row, slot + i);
        }
    });
    cells.forEach((cell, i) => {
        const el = cell || document.createElement('span');
        if (!cell) el.className = 'slot-gap';
        if (i === 0) el.classList.add('slot-first');
        clip.appendChild(el);
    });

    rowEl.appendChild(makeLabel(row.name));
    rowEl.appendChild(clip);
    rowEl.appendChild(makeLabel(row.name));
    map.appendChild(rowEl);
});
```
